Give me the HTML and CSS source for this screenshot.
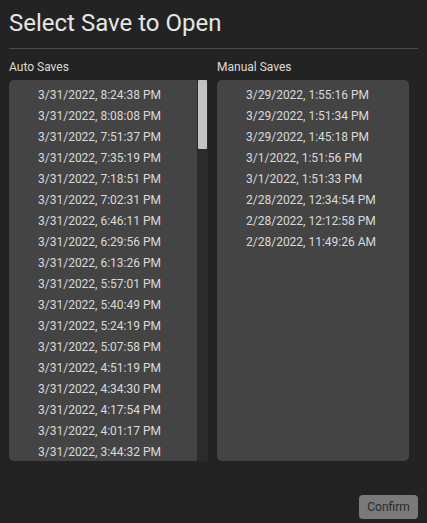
FILE: index.html
```html
<!DOCTYPE html>
<html>
<head>
<meta charset="utf-8">
<link rel="stylesheet" href="styles.css">
</head>
<body>
<div class="dialog">
  <h1 class="title">Select Save to Open</h1>
  <hr class="divider">
  <div class="columns">
    <div class="col col-auto">
      <div class="label">Auto Saves</div>
      <div class="box box-auto">
        <ul class="list">
          <li>3/31/2022, 8:24:38 PM</li>
          <li>3/31/2022, 8:08:08 PM</li>
          <li>3/31/2022, 7:51:37 PM</li>
          <li>3/31/2022, 7:35:19 PM</li>
          <li>3/31/2022, 7:18:51 PM</li>
          <li>3/31/2022, 7:02:31 PM</li>
          <li>3/31/2022, 6:46:11 PM</li>
          <li>3/31/2022, 6:29:56 PM</li>
          <li>3/31/2022, 6:13:26 PM</li>
          <li>3/31/2022, 5:57:01 PM</li>
          <li>3/31/2022, 5:40:49 PM</li>
          <li>3/31/2022, 5:24:19 PM</li>
          <li>3/31/2022, 5:07:58 PM</li>
          <li>3/31/2022, 4:51:19 PM</li>
          <li>3/31/2022, 4:34:30 PM</li>
          <li>3/31/2022, 4:17:54 PM</li>
          <li>3/31/2022, 4:01:17 PM</li>
          <li>3/31/2022, 3:44:32 PM</li>
        </ul>
        <div class="scrollbar"><div class="thumb"></div></div>
      </div>
    </div>
    <div class="col col-manual">
      <div class="label">Manual Saves</div>
      <div class="box box-manual">
        <ul class="list">
          <li>3/29/2022, 1:55:16 PM</li>
          <li>3/29/2022, 1:51:34 PM</li>
          <li>3/29/2022, 1:45:18 PM</li>
          <li>3/1/2022, 1:51:56 PM</li>
          <li>3/1/2022, 1:51:33 PM</li>
          <li>2/28/2022, 12:34:54 PM</li>
          <li>2/28/2022, 12:12:58 PM</li>
          <li>2/28/2022, 11:49:26 AM</li>
        </ul>
      </div>
    </div>
  </div>
  <div class="footer">
    <button class="confirm">Confirm</button>
  </div>
</div>
</body>
</html>
```
FILE: styles.css
```css
html, body {
  margin: 0;
  padding: 0;
  background: #232323;
}
body {
  width: 427px;
  height: 523px;
  overflow: hidden;
  font-family: Roboto, "Liberation Sans", sans-serif;
  color: #dedede;
}
.dialog {
  padding: 0 9px;
  display: flex;
  flex-direction: column;
  height: 523px;
  box-sizing: border-box;
}
.title {
  margin: 0;
  padding-top: 8px;
  font-size: 24px;
  font-weight: 400;
  line-height: 30px;
  color: #e6e6e6;
}
.divider {
  margin: 10px 0 0 0;
  border: none;
  height: 1px;
  background: #4b4b4b;
}
.columns {
  display: flex;
  gap: 9px;
  margin-top: 11px;
}
.col {
  display: flex;
  flex-direction: column;
}
.col-auto { width: 199px; }
.col-manual { width: 192px; }
.label {
  font-size: 12px;
  line-height: 15px;
  height: 20px;
  color: #dcdcdc;
}
.box {
  height: 381px;
  background: #444444;
  border-radius: 5px;
  overflow: hidden;
  display: flex;
}
.box-auto {
  border-radius: 5px 0 0 5px;
}
.list {
  list-style: none;
  margin: 0;
  padding: 5px 0 0 29px;
  flex: 1;
  overflow: hidden;
  font-size: 12px;
  color: #dadada;
}
.list li {
  height: 21px;
  line-height: 21px;
  white-space: nowrap;
}
.scrollbar {
  width: 11px;
  background: #2b2b2b;
  flex: none;
  padding-left: 1px;
  box-sizing: border-box;
}
.thumb {
  width: 9px;
  height: 69px;
  background: #c3c3c3;
  border-radius: 1px;
}
.footer {
  margin-top: auto;
  display: flex;
  justify-content: flex-end;
  padding-bottom: 4px;
}
.confirm {
  width: 59px;
  height: 24px;
  border: none;
  border-radius: 4px;
  background: #7a7a7a;
  color: #2a2a2a;
  font-family: Roboto, "Liberation Sans", sans-serif;
  font-size: 12px;
  padding: 0;
}
```
